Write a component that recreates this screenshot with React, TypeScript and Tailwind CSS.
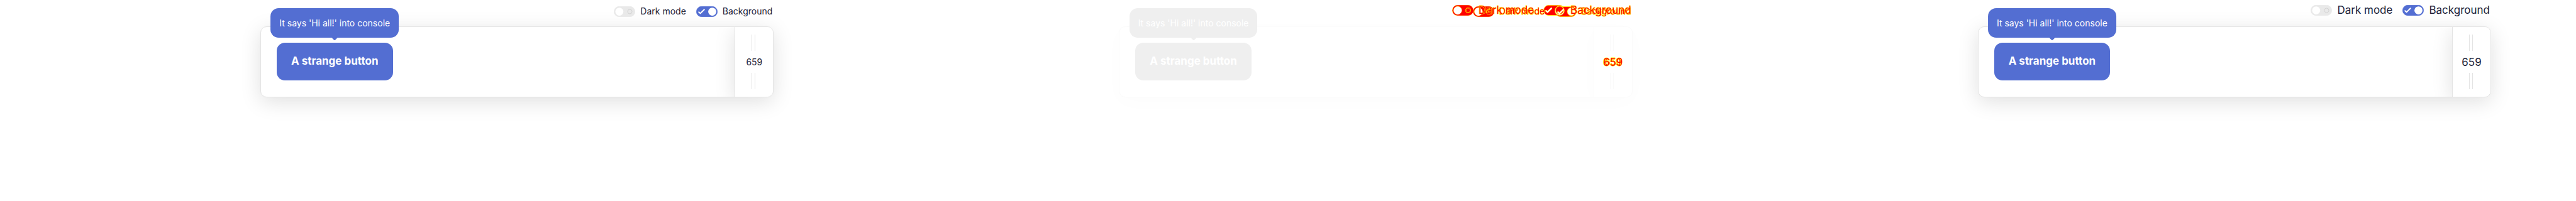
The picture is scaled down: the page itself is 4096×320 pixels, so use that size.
import { useId, useState } from "react";

type Tone = "normal" | "diff";
type Size = "small" | "large";

type ToggleProps = { on: boolean; onChange: () => void; tone: Tone; id: string; bare?: boolean };

function Toggle({ on, onChange, tone, id, bare = false }: ToggleProps) {
  const diff = tone === "diff";
  const track = diff ? "#ff0000" : on ? "#536ed2" : "#e9e9e9";
  const edge = diff ? "#ffff00" : "none";
  return (
    <span className="relative block h-[17px] w-[34px] shrink-0">
      <input
        id={id}
        type="checkbox"
        checked={on}
        onChange={onChange}
        className="block h-full w-full cursor-pointer appearance-none rounded-full"
      />
      {!bare && (
        <svg viewBox="0 0 64 32" className="pointer-events-none absolute inset-0 h-full w-full" aria-hidden="true">
          <rect x="0.7" y="0.7" width="62.6" height="30.6" rx="15.3" fill={track} stroke={diff ? edge : track} strokeWidth="1.4" />
          <circle cx={on ? 48 : 16.6} cy="16" r="12" fill="#fff" stroke={edge} strokeWidth="1.4" />
          {on ? (
            <path d="M8 17.4 12.4 21.4 24 10" fill="none" stroke="#fff" strokeWidth="3.8" strokeLinecap="round" strokeLinejoin="round" />
          ) : (
            <g fill="none">
              {diff && <circle cx="48" cy="16" r="6.8" stroke="#ffff00" strokeWidth="3.4" />}
              <circle cx="48" cy="16" r="6.6" stroke={diff ? "#ff0000" : "#cacaca"} strokeWidth="1.4" />
            </g>
          )}
        </svg>
      )}
    </span>
  );
}

function Options({ size, tone }: { size: Size; tone: Tone }) {
  const [dark, setDark] = useState(false);
  const [background, setBackground] = useState(true);
  const id = useId();
  const diff = tone === "diff";
  const box = size === "small" ? "pt-[9px] text-[14px] leading-[18px]" : "pt-[5px] text-[17px] leading-[22px]";
  const color = diff ? "text-[#ff0000] [-webkit-text-stroke:1px_#ffff00] [paint-order:stroke]" : "text-[#1a1d38]";
  return (
    <div className={`relative z-10 col-start-1 row-start-1 flex items-start justify-end gap-4 pr-[2px] ${box} ${color}`}>
      <div className="flex items-center gap-2">
        <Toggle id={`${id}-dark`} on={dark} onChange={() => setDark(!dark)} tone={tone} />
        <label htmlFor={`${id}-dark`} className="relative whitespace-nowrap">Dark mode</label>
      </div>
      <div className="flex items-center gap-2">
        <Toggle id={`${id}-bg`} on={background} onChange={() => setBackground(!background)} tone={tone} bare={diff} />
        <label htmlFor={`${id}-bg`} className="relative whitespace-nowrap">Background</label>
      </div>
    </div>
  );
}

function ToggleOverlap() {
  return (
    <svg viewBox="0 0 100 36" className="absolute top-[8px] right-[89px] h-[19px] w-[53px]" aria-hidden="true">
      <rect x="0.7" y="0.7" width="62.6" height="30.6" rx="15.3" fill="#ff0000" stroke="#ffff00" strokeWidth="1.4" />
      <path d="M8 17.4 12.4 21.4 24 10" fill="none" stroke="#ffff00" strokeWidth="5" strokeLinecap="round" strokeLinejoin="round" />
      <path d="M8 17.4 12.4 21.4 24 10" fill="none" stroke="#fff" strokeWidth="3.8" strokeLinecap="round" strokeLinejoin="round" />
      <rect x="36.7" y="4.7" width="62.6" height="30.6" rx="15.3" fill="#ff0000" stroke="#ffff00" strokeWidth="1.4" />
      <circle cx="84" cy="20" r="12" fill="#fff" stroke="#ffff00" strokeWidth="1.4" />
      <circle cx="49" cy="17" r="14" fill="#efefef" stroke="#ffff00" strokeWidth="1.4" />
      <circle cx="49" cy="15.5" r="12" fill="#ff0000" stroke="#ffff00" strokeWidth="1.4" />
      <path d="M44 21.4 48.4 25.4 60 14" fill="none" stroke="#ffff00" strokeWidth="5" strokeLinecap="round" strokeLinejoin="round" />
      <path d="M44 21.4 48.4 25.4 60 14" fill="none" stroke="#fff" strokeWidth="3.8" strokeLinecap="round" strokeLinejoin="round" />
    </svg>
  );
}

function Grip({ tone }: { tone: Tone }) {
  const line = tone === "diff" ? "border-[#fafafa]" : "border-[#e4e4e4]";
  return <span className={`mr-[3px] h-[26px] w-[6px] border-x ${line}`} />;
}

function Value({ size, tone }: { size: Size; tone: Tone }) {
  const text = size === "small" ? "text-[14px]" : "text-[17px]";
  const color = tone === "diff" ? "text-[#ff0000] [-webkit-text-stroke:1px_#ffff00] [paint-order:stroke]" : "text-[#1a1d38]";
  return <output className={`col-start-1 row-start-1 leading-[22px] ${text} ${color}`}>659</output>;
}

function Playground({ tone, sizes }: { tone: Tone; sizes: Size[] }) {
  const diff = tone === "diff";
  const fill = diff ? "bg-[#efefef]" : "bg-[#536ed2]";
  const frame = diff
    ? "border-[#fbfbfb] shadow-[0_7px_33px_rgba(0,0,0,0.014)]"
    : "border-[#e4e4e4] shadow-[0_7px_33px_rgba(0,0,0,0.125)]";
  return (
    <section className="min-w-0 pr-[135px] pl-[414px]">
      <div className="relative z-10 grid h-[42px] items-start">
        {diff && <ToggleOverlap />}
        {sizes.map((size) => (
          <Options key={size} size={size} tone={tone} />
        ))}
      </div>
      <div className={`flex rounded-[10px] border bg-white ${frame}`}>
        <div className="flex-1 pt-[25px] pb-[26px] pl-[25px]">
          <div className="relative z-20 inline-block align-top">
            <button type="button" className={`block h-[60px] rounded-[13px] px-[23px] text-[17px] font-bold whitespace-nowrap text-white ${fill}`}>
              A strange button
            </button>
            <div
              role="tooltip"
              className={`absolute bottom-full left-1/2 mb-2 flex h-[47px] -translate-x-1/2 items-center rounded-[13px] px-[14px] text-[14px] whitespace-nowrap text-white ${fill}`}
            >
              It says 'Hi all!' into console
              <svg viewBox="0 0 12 4" className="absolute top-full left-1/2 h-[4px] w-[12px] -translate-x-1/2" aria-hidden="true">
                <path d="M0 0C1.6 0 2 .4 2.8 1.4L5.2 3.7Q6 4.3 6.8 3.7L9.2 1.4C10 .4 10.4 0 12 0Z" fill={diff ? "#efefef" : "#536ed2"} />
              </svg>
            </div>
          </div>
        </div>
        <div className="flex w-[120px] justify-end overflow-hidden rounded-r-[9px]">
          <div className={`flex w-[61px] flex-col items-center justify-between border-l bg-white py-[12px] ${frame}`}>
            <Grip tone={tone} />
            <div className="grid place-items-center">
              {sizes.map((size) => (
                <Value key={size} size={size} tone={tone} />
              ))}
            </div>
            <Grip tone={tone} />
          </div>
        </div>
      </div>
    </section>
  );
}

export default function App() {
  return (
    <main className="grid min-h-screen grid-cols-3 items-start bg-white font-['Inter','Liberation_Sans',sans-serif]">
      <Playground tone="normal" sizes={["small"]} />
      <Playground tone="diff" sizes={["small", "large"]} />
      <Playground tone="normal" sizes={["large"]} />
    </main>
  );
}
